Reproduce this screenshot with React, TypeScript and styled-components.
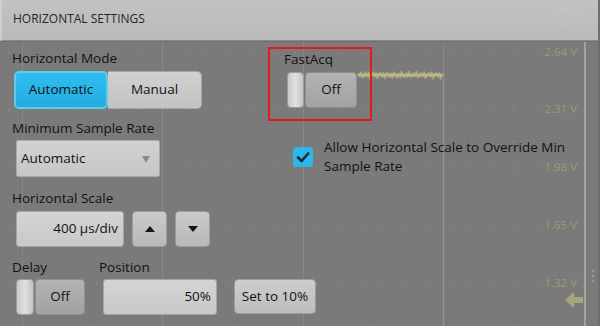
import React from "react";
import styled, { createGlobalStyle } from "styled-components";

const GlobalStyle = createGlobalStyle`
  html, body {
    margin: 0;
    padding: 0;
    background: #7a7a7a;
  }
  * {
    box-sizing: border-box;
  }
`;

const gridX = [22, 162, 303, 443];
const gridY = [52, 109, 167, 225, 283];
const voltLabels = ["2.64 V", "2.31 V", "1.98 V", "1.65 V", "1.32 V"];

function ScopeBackdrop() {
  const dots: React.ReactNode[] = [];
  gridY.forEach((y) => {
    for (let x = 8; x < 580; x += 22) {
      dots.push(<rect key={`h-${x}-${y}`} x={x} y={y} width={1.4} height={1.4} fill="#8c8c8c" />);
    }
  });
  gridX.forEach((x) => {
    const mid = x + 70;
    if (mid < 580) {
      for (let y = 60; y < 326; y += 11.5) {
        dots.push(<rect key={`v-${mid}-${y}`} x={mid} y={y} width={1.4} height={1.4} fill="#878787" />);
      }
    }
  });
  const wave: string[] = [];
  for (let x = 358; x <= 443; x += 1.5) {
    const n = Math.sin(x * 1.7) * 1.4 + Math.cos(x * 0.9) * 0.9;
    wave.push(`${x},${75 + n}`);
  }
  return (
    <Backdrop width="600" height="326" viewBox="0 0 600 326">
      {gridX.map((x) => (
        <line key={x} x1={x + 0.5} y1={40} x2={x + 0.5} y2={326} stroke="#8b8a74" strokeWidth={1} />
      ))}
      {dots}
      <polyline points={wave.join(" ")} fill="none" stroke="#aeaa7e" strokeWidth={3} />
      <line x1={358} y1={75} x2={443} y2={75} stroke="#bcb887" strokeWidth={2} />
      <line x1={443.5} y1={70} x2={443.5} y2={326} stroke="#99977a" strokeWidth={1.2} />
      {voltLabels.map((t, i) => (
        <text
          key={t}
          x={577}
          y={gridY[i] + 4}
          textAnchor="end"
          fontSize="11.5"
          fontFamily="'Open Sans', sans-serif"
          fill="#9c9a6e"
        >
          {t}
        </text>
      ))}
      <rect x={584} y={40} width={2} height={286} fill="#a2a2a2" />
      <rect x={598} y={0} width={2} height={326} fill="#6e6e6e" />
      <circle cx={593} cy={271} r={1.2} fill="#9a9a9a" />
      <circle cx={593} cy={276} r={1.2} fill="#9a9a9a" />
      <circle cx={593} cy={281} r={1.2} fill="#9a9a9a" />
      <path d="M565 300 L574 292 L574 297 L583 297 L583 303 L574 303 L574 308 Z" fill="#a8a57a" />
    </Backdrop>
  );
}

function CheckIcon() {
  return (
    <svg width="20" height="20" viewBox="0 0 20 20">
      <path d="M5 10.5 L8.6 14 L15.2 6.5" fill="none" stroke="#1f2b33" strokeWidth={2.6} strokeLinecap="round" strokeLinejoin="round" />
    </svg>
  );
}

function App() {
  return (
    <Screen>
      <GlobalStyle />
      <ScopeBackdrop />
      <Header>
        <HeaderTitle>HORIZONTAL SETTINGS</HeaderTitle>
        <PinGhost viewBox="0 0 30 22" width="30" height="22">
          <path d="M3 3 L27 3 L15 19 Z" fill="none" stroke="#c6c6c6" strokeWidth={2} />
        </PinGhost>
      </Header>
      <Body>
        <LeftCol>
          <Label>Horizontal Mode</Label>
          <Segmented>
            <Segment $active>Automatic</Segment>
            <Segment>Manual</Segment>
          </Segmented>

          <Label $top={11}>Minimum Sample Rate</Label>
          <Dropdown>
            <span>Automatic</span>
            <Caret />
          </Dropdown>

          <Label $top={13}>Horizontal Scale</Label>
          <ControlRow>
            <ValueField $width={108}>400 µs/div</ValueField>
            <ArrowButton>
              <Tri $up />
            </ArrowButton>
            <ArrowButton>
              <Tri />
            </ArrowButton>
          </ControlRow>

          <BottomRow>
            <Group $width={87}>
              <Label>Delay</Label>
              <Toggle $knob={18} $width={69}>
                <Knob />
                <ToggleFace>Off</ToggleFace>
              </Toggle>
            </Group>
            <Group>
              <Label>Position</Label>
              <ValueField $width={114}>50%</ValueField>
            </Group>
            <PlainButton>Set to 10%</PlainButton>
          </BottomRow>
        </LeftCol>

        <RightCol>
          <Highlight>
            <Label>FastAcq</Label>
            <Toggle $knob={17} $width={70}>
              <Knob />
              <ToggleFace>Off</ToggleFace>
            </Toggle>
          </Highlight>
          <CheckRow>
            <CheckBox>
              <CheckIcon />
            </CheckBox>
            <CheckText>
              <div>Allow Horizontal Scale to Override Min</div>
              <div>Sample Rate</div>
            </CheckText>
          </CheckRow>
        </RightCol>
      </Body>
    </Screen>
  );
}

const Screen = styled.div`
  position: relative;
  width: 600px;
  height: 326px;
  overflow: hidden;
  background: #7a7a7a;
  font-family: "Open Sans", "Noto Sans", sans-serif;
  font-weight: 500;
  color: #121212;
`;

const Backdrop = styled.svg`
  position: absolute;
  left: 0;
  top: 0;
  z-index: 0;
`;

const Header = styled.div`
  position: relative;
  z-index: 1;
  display: flex;
  align-items: center;
  justify-content: space-between;
  width: 598px;
  height: 41px;
  padding: 0 16px 4px 11px;
  background: linear-gradient(#c2c2c2, #bababa);
  border-bottom: 1px solid #8a8a8a;
  border-left: 2px solid #cfcfcf;
  box-shadow: 0 1px 0 #6f6f6f;
`;

const HeaderTitle = styled.div`
  font-size: 12px;
  color: #262626;
`;

const PinGhost = styled.svg`
  opacity: 0.45;
`;

const Body = styled.div`
  position: relative;
  z-index: 1;
  display: flex;
`;

const LeftCol = styled.div`
  width: 256px;
  padding: 9px 0 0 12px;
  display: flex;
  flex-direction: column;
  align-items: flex-start;
`;

const RightCol = styled.div`
  display: flex;
  flex-direction: column;
  align-items: flex-start;
  padding-left: 12px;
  padding-top: 6px;
`;

const Label = styled.div<{ $top?: number }>`
  font-size: 13.5px;
  line-height: 16px;
  margin-top: ${(p) => p.$top ?? 0}px;
  white-space: nowrap;
`;

const Segmented = styled.div`
  display: flex;
  margin: 5px 0 0 2px;
  height: 38px;
`;

const Segment = styled.div<{ $active?: boolean }>`
  width: 94px;
  display: flex;
  align-items: center;
  justify-content: center;
  padding-bottom: 3px;
  font-size: 13.5px;
  border-radius: ${(p) => (p.$active ? "5px" : "0 5px 5px 0")};
  background: ${(p) =>
    p.$active ? "linear-gradient(#2fbdf0, #22addf)" : "linear-gradient(#d0d0d0, #c3c3c3)"};
  border: ${(p) => (p.$active ? "2px solid #63cbe9" : "1px solid #a6a6a6")};
  border-left: ${(p) => (p.$active ? "2px solid #63cbe9" : "none")};
`;

const Dropdown = styled.div`
  display: flex;
  align-items: center;
  justify-content: space-between;
  width: 144px;
  height: 37px;
  margin: 4px 0 0 4px;
  padding: 0 9px 2px 4px;
  background: linear-gradient(#d2d2d2, #c6c6c6);
  border: 1px solid #a9a9a9;
  border-radius: 2px;
  font-size: 13.5px;
`;

const Caret = styled.span`
  width: 0;
  height: 0;
  margin-top: 4px;
  border-left: 4px solid transparent;
  border-right: 4px solid transparent;
  border-top: 7px solid #8a8a8a;
`;

const ControlRow = styled.div`
  display: flex;
  gap: 8px;
  margin: 5px 0 0 4px;
`;

const ValueField = styled.div<{ $width: number }>`
  width: ${(p) => p.$width}px;
  height: 36px;
  display: flex;
  align-items: center;
  justify-content: flex-end;
  padding: 0 5px 2px 0;
  background: linear-gradient(#d4d4d4, #c8c8c8);
  border: 1px solid #a5a5a5;
  border-radius: 3px;
  font-size: 13.5px;
`;

const ArrowButton = styled.div`
  width: 35px;
  height: 36px;
  display: flex;
  align-items: center;
  justify-content: center;
  background: linear-gradient(#cacaca, #b9b9b9);
  border: 1px solid #9c9c9c;
  border-radius: 4px;
`;

const Tri = styled.span<{ $up?: boolean }>`
  width: 0;
  height: 0;
  border-left: 5px solid transparent;
  border-right: 5px solid transparent;
  ${(p) => (p.$up ? "border-bottom: 6px solid #151515;" : "border-top: 6px solid #151515;")}
`;

const BottomRow = styled.div`
  display: flex;
  align-items: flex-end;
  margin-top: 12px;
`;

const Group = styled.div<{ $width?: number }>`
  display: flex;
  flex-direction: column;
  align-items: flex-start;
  gap: 4px;
  ${(p) => (p.$width ? `width: ${p.$width}px;` : "")}
  & > :last-child {
    margin-left: 4px;
  }
`;

const Toggle = styled.div<{ $knob: number; $width: number }>`
  display: flex;
  gap: 1px;
  width: ${(p) => p.$width}px;
  height: 36px;
  & > :first-child {
    width: ${(p) => p.$knob}px;
  }
`;

const Knob = styled.div`
  background: linear-gradient(90deg, #c9c9c9, #e0e0e0 50%, #c2c2c2);
  border: 1px solid #9d9d9d;
  border-radius: 4px;
`;

const ToggleFace = styled.div`
  flex: 1;
  display: flex;
  align-items: center;
  justify-content: center;
  padding-bottom: 2px;
  background: linear-gradient(#b3b3b3, #a2a2a2);
  border: 1px solid #8f8f8f;
  border-radius: 4px;
  font-size: 13.5px;
`;

const PlainButton = styled.div`
  width: 82px;
  height: 35px;
  margin-left: 17px;
  margin-bottom: 1px;
  display: flex;
  align-items: center;
  justify-content: center;
  padding-bottom: 2px;
  background: linear-gradient(#cdcdcd, #bdbdbd);
  border: 1px solid #9c9c9c;
  border-radius: 4px;
  font-size: 13.5px;
`;

const Highlight = styled.div`
  width: 104px;
  height: 74px;
  border: 2px solid #e3191c;
  padding: 2px 0 0 14px;
  display: flex;
  flex-direction: column;
  align-items: flex-start;
  gap: 5px;
  & > :last-child {
    margin-left: 3px;
  }
`;

const CheckRow = styled.div`
  display: flex;
  align-items: center;
  gap: 11px;
  margin: 17px 0 0 25px;
`;

const CheckBox = styled.div`
  width: 20px;
  height: 20px;
  border-radius: 4px;
  background: #2ab7ea;
  display: flex;
  align-items: center;
  justify-content: center;
`;

const CheckText = styled.div`
  font-size: 13.5px;
  line-height: 18.5px;
  white-space: nowrap;
`;

export default App;
